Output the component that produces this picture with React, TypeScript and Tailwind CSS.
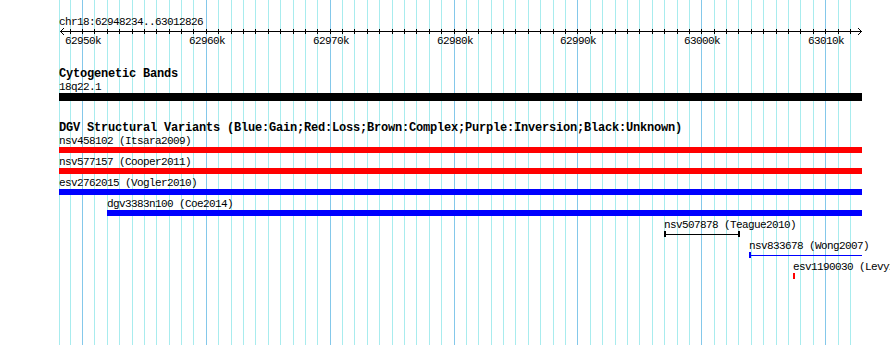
import React from 'react';

const START = 62948234;
const END = 63012826;
const toX = (pos: number) => Math.round(60.13 + ((pos - START) * 800) / (END - START));

const kbs: number[] = [];
for (let k = 62949; k <= 63012; k++) kbs.push(k);

type Variant = {
  label: string;
  x: number;
  width: number;
  kind: 'bar' | 'span' | 'open' | 'tick';
  color: string;
};

const variants: Variant[] = [
  { label: 'nsv458102 (Itsara2009)', x: 59, width: 803, kind: 'bar', color: 'bg-[#ff0000]' },
  { label: 'nsv577157 (Cooper2011)', x: 59, width: 803, kind: 'bar', color: 'bg-[#ff0000]' },
  { label: 'esv2762015 (Vogler2010)', x: 59, width: 803, kind: 'bar', color: 'bg-[#0000ff]' },
  { label: 'dgv3383n100 (Coe2014)', x: 107, width: 755, kind: 'bar', color: 'bg-[#0000ff]' },
  { label: 'nsv507878 (Teague2010)', x: 664, width: 76, kind: 'span', color: 'bg-black' },
  { label: 'nsv833678 (Wong2007)', x: 749, width: 113, kind: 'open', color: 'bg-[#0000ff]' },
  { label: 'esv1190030 (Levy2007)', x: 793, width: 2, kind: 'tick', color: 'bg-[#ff0000]' },
];

const small = "h-[11px] leading-[11px] text-[11px] tracking-[-0.6px] whitespace-nowrap";
const bold = "h-[11px] leading-[11px] text-[12px] font-bold tracking-[-0.2px] whitespace-nowrap";

function Grid() {
  return (
    <svg className="absolute left-0 top-0" width={890} height={345} shapeRendering="crispEdges">
      <rect x={59} y={0} width={1} height={345} fill="#a8ecee" />
      {kbs.map(k => (
        <rect key={k} x={toX(k * 1000)} y={0} width={1} height={345} fill={k % 10 === 0 ? '#84c8ea' : '#a8ecee'} />
      ))}
    </svg>
  );
}

function Ruler() {
  return (
    <svg width={890} height={41} className="block" shapeRendering="crispEdges">
      <rect x={60} y={3} width={802} height={1} fill="#000" />
      <polyline points="64.5,-0.5 60.5,3.5 64.5,7.5" fill="none" stroke="#000" strokeWidth={1} />
      <polyline points="857.5,-0.5 861.5,3.5 857.5,7.5" fill="none" stroke="#000" strokeWidth={1} />
      {kbs.map(k => (
        <rect key={k} x={toX(k * 1000)} y={1} width={1} height={5} fill="#000" />
      ))}
      {kbs.filter(k => k % 10 === 0).map(k => (
        <text
          key={k}
          x={toX(k * 1000) + 1}
          y={16}
          textAnchor="middle"
          fontFamily="'Liberation Mono', monospace"
          fontSize={11}
          letterSpacing={-0.6}
          fill="#000"
        >
          {k}k
        </text>
      ))}
    </svg>
  );
}

function Glyph({ v }: { v: Variant }) {
  if (v.kind === 'bar' || v.kind === 'tick') {
    return <div className={`h-[6px] ${v.color}`} style={{ width: v.width }} />;
  }
  return (
    <div className="flex h-[6px] items-center" style={{ width: v.width }}>
      <div className={`w-[2px] h-[6px] ${v.color}`} />
      <div className={`flex-1 h-px ${v.color}`} />
      {v.kind === 'span' && <div className={`w-[2px] h-[6px] ${v.color}`} />}
    </div>
  );
}

export default function App() {
  return (
    <div className="relative w-[890px] h-[345px] overflow-hidden bg-white">
      <Grid />
      <div className="relative pt-[17px] font-['Liberation_Mono',monospace] text-black">
        <div className={`pl-[59px] ${small}`}>chr18:62948234..63012826</div>
        <Ruler />

        <div className={`pl-[59px] ${bold}`}>Cytogenetic Bands</div>
        <div className={`pl-[59px] mt-[2px] ${small}`}>18q22.1</div>
        <div className="ml-[59px] w-[803px] h-[8px] bg-black" />

        <div className={`pl-[59px] mt-[22px] ${bold}`}>
          DGV Structural Variants (Blue:Gain;Red:Loss;Brown:Complex;Purple:Inversion;Black:Unknown)
        </div>
        <div className="mt-[1px] flex flex-col gap-[3px]">
          {variants.map(v => (
            <div key={v.label} className="flex flex-col" style={{ paddingLeft: v.x }}>
              <div className="h-[12px] leading-[12px] text-[11px] tracking-[-0.6px] whitespace-nowrap">{v.label}</div>
              <Glyph v={v} />
            </div>
          ))}
        </div>
      </div>
    </div>
  );
}
